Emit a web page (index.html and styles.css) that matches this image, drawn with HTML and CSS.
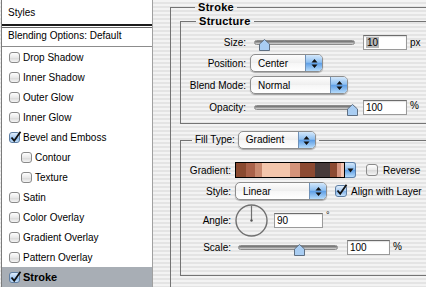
FILE: index.html
```html
<!DOCTYPE html>
<html>
<head>
	<title>Layer Style</title>
	<link rel="stylesheet" href="styles.css">
</head>
<body>
	<div class="dialog">
		<div class="styles">
			<div class="styles-head">Styles</div>
			<div class="blend-opts">Blending Options: Default</div>
			<ul class="effects">
				<li><span class="check"></span>Drop Shadow</li>
				<li><span class="check"></span>Inner Shadow</li>
				<li><span class="check"></span>Outer Glow</li>
				<li><span class="check"></span>Inner Glow</li>
				<li><span class="check on"><svg viewBox="0 0 13 13"><path d="M2.5 6.5 L5.2 9.8 L11.5 0.8"/></svg></span>Bevel and Emboss</li>
				<li class="sub"><span class="check"></span>Contour</li>
				<li class="sub"><span class="check"></span>Texture</li>
				<li><span class="check"></span>Satin</li>
				<li><span class="check"></span>Color Overlay</li>
				<li><span class="check"></span>Gradient Overlay</li>
				<li><span class="check"></span>Pattern Overlay</li>
				<li class="active"><span class="check on"><svg viewBox="0 0 13 13"><path d="M2.5 6.5 L5.2 9.8 L11.5 0.8"/></svg></span>Stroke</li>
			</ul>
		</div>
		<div class="options">
			<fieldset class="group stroke">
				<legend>Stroke</legend>
				<fieldset class="group structure">
					<legend>Structure</legend>
					<div class="row first">
						<span class="lbl">Size:</span>
						<div class="slider s-size"><svg class="thumb" style="left:10%" viewBox="0 0 11 12"><path d="M5.5 0.5 L10.5 5 L10.5 11.5 L0.5 11.5 L0.5 5 Z"/></svg></div>
						<span class="field f-size"><span class="sel">10</span></span>
						<span class="unit">px</span>
					</div>
					<div class="row">
						<span class="lbl">Position:</span>
						<div class="popup p-pos">Center<span class="arrows"><svg viewBox="0 0 7 11"><path d="M3.5 1 L6.5 4.5 L0.5 4.5 Z M3.5 10 L6.5 6.5 L0.5 6.5 Z"/></svg></span></div>
					</div>
					<div class="row">
						<span class="lbl">Blend Mode:</span>
						<div class="popup p-blend">Normal<span class="arrows"><svg viewBox="0 0 7 11"><path d="M3.5 1 L6.5 4.5 L0.5 4.5 Z M3.5 10 L6.5 6.5 L0.5 6.5 Z"/></svg></span></div>
					</div>
					<div class="row">
						<span class="lbl">Opacity:</span>
						<div class="slider s-opac"><svg class="thumb" style="left:98%" viewBox="0 0 11 12"><path d="M5.5 0.5 L10.5 5 L10.5 11.5 L0.5 11.5 L0.5 5 Z"/></svg></div>
						<span class="field f-size">100</span>
						<span class="unit">%</span>
					</div>
				</fieldset>
				<fieldset class="group fill">
					<legend><span class="legend-lbl">Fill Type:</span><span class="popup p-fill">Gradient<span class="arrows"><svg viewBox="0 0 7 11"><path d="M3.5 1 L6.5 4.5 L0.5 4.5 Z M3.5 10 L6.5 6.5 L0.5 6.5 Z"/></svg></span></span></legend>
					<div class="row r-grad">
						<span class="lbl">Gradient:</span>
						<div class="grad-pick">
							<span class="grad-bar"></span>
							<span class="grad-arrow"><svg viewBox="0 0 7 5"><path d="M0.5 0.5 L6.5 0.5 L3.5 4.5 Z"/></svg></span>
						</div>
						<span class="check c-rev"></span>
						<span class="check-lbl">Reverse</span>
					</div>
					<div class="row r-style">
						<span class="lbl">Style:</span>
						<div class="popup p-style">Linear<span class="arrows"><svg viewBox="0 0 7 11"><path d="M3.5 1 L6.5 4.5 L0.5 4.5 Z M3.5 10 L6.5 6.5 L0.5 6.5 Z"/></svg></span></div>
						<span class="check on c-align"><svg viewBox="0 0 13 13"><path d="M2.5 6.5 L5.2 9.8 L11.5 0.8"/></svg></span>
						<span class="check-lbl">Align with Layer</span>
					</div>
					<div class="row r-angle">
						<span class="lbl">Angle:</span>
						<svg class="dial" viewBox="0 0 33 33">
							<circle cx="16.5" cy="16.5" r="15.5"/>
							<line x1="16.5" y1="16.5" x2="16.5" y2="1.5"/>
							<circle class="hub" cx="16.5" cy="16.5" r="1.2"/>
						</svg>
						<span class="field f-angle">90</span>
						<span class="deg">°</span>
					</div>
					<div class="row r-scale">
						<span class="lbl">Scale:</span>
						<div class="slider s-scale"><svg class="thumb" style="left:62%" viewBox="0 0 11 12"><path d="M5.5 0.5 L10.5 5 L10.5 11.5 L0.5 11.5 L0.5 5 Z"/></svg></div>
						<span class="field f-scale">100</span>
						<span class="unit">%</span>
					</div>
				</fieldset>
			</fieldset>
		</div>
	</div>
</body>
</html>
```

FILE: styles.css
```css
*{
	margin: 0;
	padding: 0;
}
html, body{
	width: 426px;
	height: 287px;
	overflow: hidden;
}
body{
	font-family: "Liberation Sans", Arial, sans-serif;
	font-size: 10px;
	color: #000;
	background: repeating-linear-gradient(to bottom, #f3f3f3 0, #f3f3f3 2px, #e4e4e4 2px, #e4e4e4 4px);
}
.dialog{
	display: flex;
	height: 287px;
}

/* left list of effects */
.styles{
	flex: none;
	width: 152px;
	height: 287px;
	margin-left: 1px;
	box-sizing: border-box;
	background: #fff;
	border-left: 1px solid #7b7b7b;
	border-right: 1px solid #a0a0a0;
}
.styles-head{
	height: 24px;
	line-height: 26px;
	padding-left: 6px;
	border-bottom: 2px solid #1c1c1c;
}
.blend-opts{
	margin-top: 1px;
	height: 18px;
	line-height: 16px;
	padding-left: 6px;
	border-top: 1px solid #6a6a6a;
	border-bottom: 1px solid #8c8c8c;
}
.effects{
	list-style: none;
}
.effects li{
	display: flex;
	align-items: center;
	height: 20px;
	padding-left: 7px;
}
.effects li.sub{
	padding-left: 19px;
}
.effects li.active{
	background: #a8aeb5;
	font-weight: bold;
	font-size: 11px;
}
.check{
	flex: none;
	position: relative;
	width: 11px;
	height: 11px;
	box-sizing: border-box;
	margin-right: 3px;
	border: 1px solid #8a8a8a;
	border-radius: 3px;
	background: linear-gradient(#ffffff, #e9e9e9 50%, #d8d8d8 51%, #f4f4f4);
}
.check.on{
	border-color: #5e7ea3;
	background: linear-gradient(#e0eefc, #a9cbf1 50%, #7fb0e8 51%, #c6e2fb);
}
.check svg{
	position: absolute;
	left: -1px;
	top: -2px;
	width: 13px;
	height: 13px;
	overflow: visible;
}
.check svg path{
	fill: none;
	stroke: #111;
	stroke-width: 1.8;
}

/* right side group boxes */
.options{
	flex: 1;
	padding-left: 17px;
}
.group{
	margin: 0;
	padding: 0;
	border: 1px solid #747474;
	border-right: 0;
	min-width: 0;
}
.group > legend{
	margin-left: 15px;
	padding: 0 3px;
	font-size: 11px;
	font-weight: bold;
	line-height: 14px;
	letter-spacing: 0.3px;
}
.stroke{
	border-bottom: 0;
	padding-left: 9px;
	height: 300px;
}
.structure{
	padding: 5px 0 5px 0;
}
.fill{
	margin-top: 6px;
	padding: 11px 0 18px 0;
}
.fill > legend{
	display: flex;
	align-items: center;
	margin-left: 11px;
	font-weight: normal;
	font-size: 10px;
	letter-spacing: 0;
	height: 20px;
}
.legend-lbl{
	margin-right: 3px;
}

.row{
	display: flex;
	align-items: center;
	height: 22px;
}
.row.first{
	height: 19px;
}
.lbl{
	flex: none;
	width: 65px;
	margin-right: 4px;
	text-align: right;
}
.fill .lbl{
	width: 50px;
}
.r-grad{
	height: 18px;
}
.r-style{
	height: 24px;
}
.r-angle{
	height: 34px;
}
.r-scale{
	height: 20px;
}

/* sliders */
.slider{
	position: relative;
	flex: none;
	height: 5px;
	box-sizing: border-box;
	border-radius: 3px;
	border: 1px solid #8b8b8b;
	background: linear-gradient(#6a6a6a, #9c9c9c 50%, #dadada);
}
.s-size, .s-opac{
	width: 101px;
	margin-left: 4px;
}
.s-scale{
	width: 100px;
	margin-left: 3px;
}
.thumb{
	position: absolute;
	top: -2px;
	width: 11px;
	height: 12px;
	margin-left: -5.5px;
}
.thumb path{
	fill: #a9cdf2;
	stroke: #5f6f82;
	stroke-width: 1;
}

/* text fields */
.field{
	flex: none;
	box-sizing: border-box;
	height: 15px;
	line-height: 13px;
	padding-left: 2px;
	background: #fff;
	border: 1px solid #9a9a9a;
	border-top-color: #6c6c6c;
	box-shadow: inset 0 1px 1px rgba(0, 0, 0, 0.12);
}
.f-size{
	width: 44px;
	margin-left: 8px;
}
.f-angle{
	width: 49px;
	margin-left: 6px;
}
.f-scale{
	width: 43px;
	margin-left: 9px;
}
.sel{
	background: #b7b7b7;
	padding: 0 1px;
}
.unit{
	margin-left: 3px;
	align-self: flex-start;
	margin-top: 4px;
}
.deg{
	margin-left: 3px;
	align-self: flex-start;
	margin-top: 7px;
	font-size: 9px;
}

/* popup buttons */
.popup{
	flex: none;
	display: flex;
	align-items: center;
	height: 18px;
	box-sizing: border-box;
	padding-left: 7px;
	border: 1px solid #8d8d8d;
	border-radius: 5px;
	background: linear-gradient(#fdfdfd, #eeeeee 50%, #f6f6f6 51%, #ffffff);
	box-shadow: 0 1px 1px rgba(0, 0, 0, 0.3);
	overflow: hidden;
}
.arrows{
	margin-left: auto;
	width: 16px;
	height: 100%;
	display: flex;
	align-items: center;
	justify-content: center;
	border-left: 1px solid #6e91b8;
	background: linear-gradient(#d4e8fb, #8fc0f1 45%, #5f9fe6 52%, #b6dbfa);
}
.arrows svg{
	width: 7px;
	height: 11px;
}
.arrows path{
	fill: #111;
}
.p-pos{
	width: 73px;
}
.p-blend{
	width: 98px;
}
.p-fill{
	width: 78px;
}
.p-style{
	width: 92px;
}

/* gradient picker */
.grad-pick{
	flex: none;
	display: flex;
	height: 16px;
}
.grad-bar{
	width: 110px;
	box-sizing: border-box;
	border: 1px solid #000;
	background: linear-gradient(to right,
		#8a4a30 0, #8a4a30 10px,
		#a9624a 10px, #a9624a 19px,
		#c98a70 19px, #c98a70 26px,
		#f3c6ac 26px, #f3c6ac 54px,
		#d4937a 54px, #d4937a 64px,
		#8c4a32 64px, #8c4a32 79px,
		#463a3a 79px, #463a3a 94px,
		#8c4a32 94px, #8c4a32 101px,
		#d69580 101px, #d69580 105px,
		#f4c6b4 105px);
}
.grad-arrow{
	width: 11px;
	box-sizing: border-box;
	display: flex;
	align-items: center;
	justify-content: center;
	border: 1px solid #5b7fa8;
	border-left: 0;
	border-radius: 0 3px 3px 0;
	background: linear-gradient(#d4e8fb, #8fc0f1 45%, #5f9fe6 52%, #b6dbfa);
}
.grad-arrow svg{
	width: 7px;
	height: 5px;
}
.grad-arrow path{
	fill: #111;
}
.c-rev{
	width: 12px;
	height: 12px;
	margin-left: 10px;
	margin-right: 5px;
}
.c-align{
	width: 12px;
	height: 12px;
	margin-left: 8px;
	margin-right: 4px;
}
.check-lbl{
	white-space: nowrap;
}

/* angle dial */
.dial{
	flex: none;
	width: 33px;
	height: 33px;
}
.dial circle{
	fill: none;
	stroke: #707070;
	stroke-width: 1.4;
}
.dial line{
	stroke: #707070;
	stroke-width: 1.2;
}
.dial .hub{
	fill: #555;
	stroke: none;
}
```
